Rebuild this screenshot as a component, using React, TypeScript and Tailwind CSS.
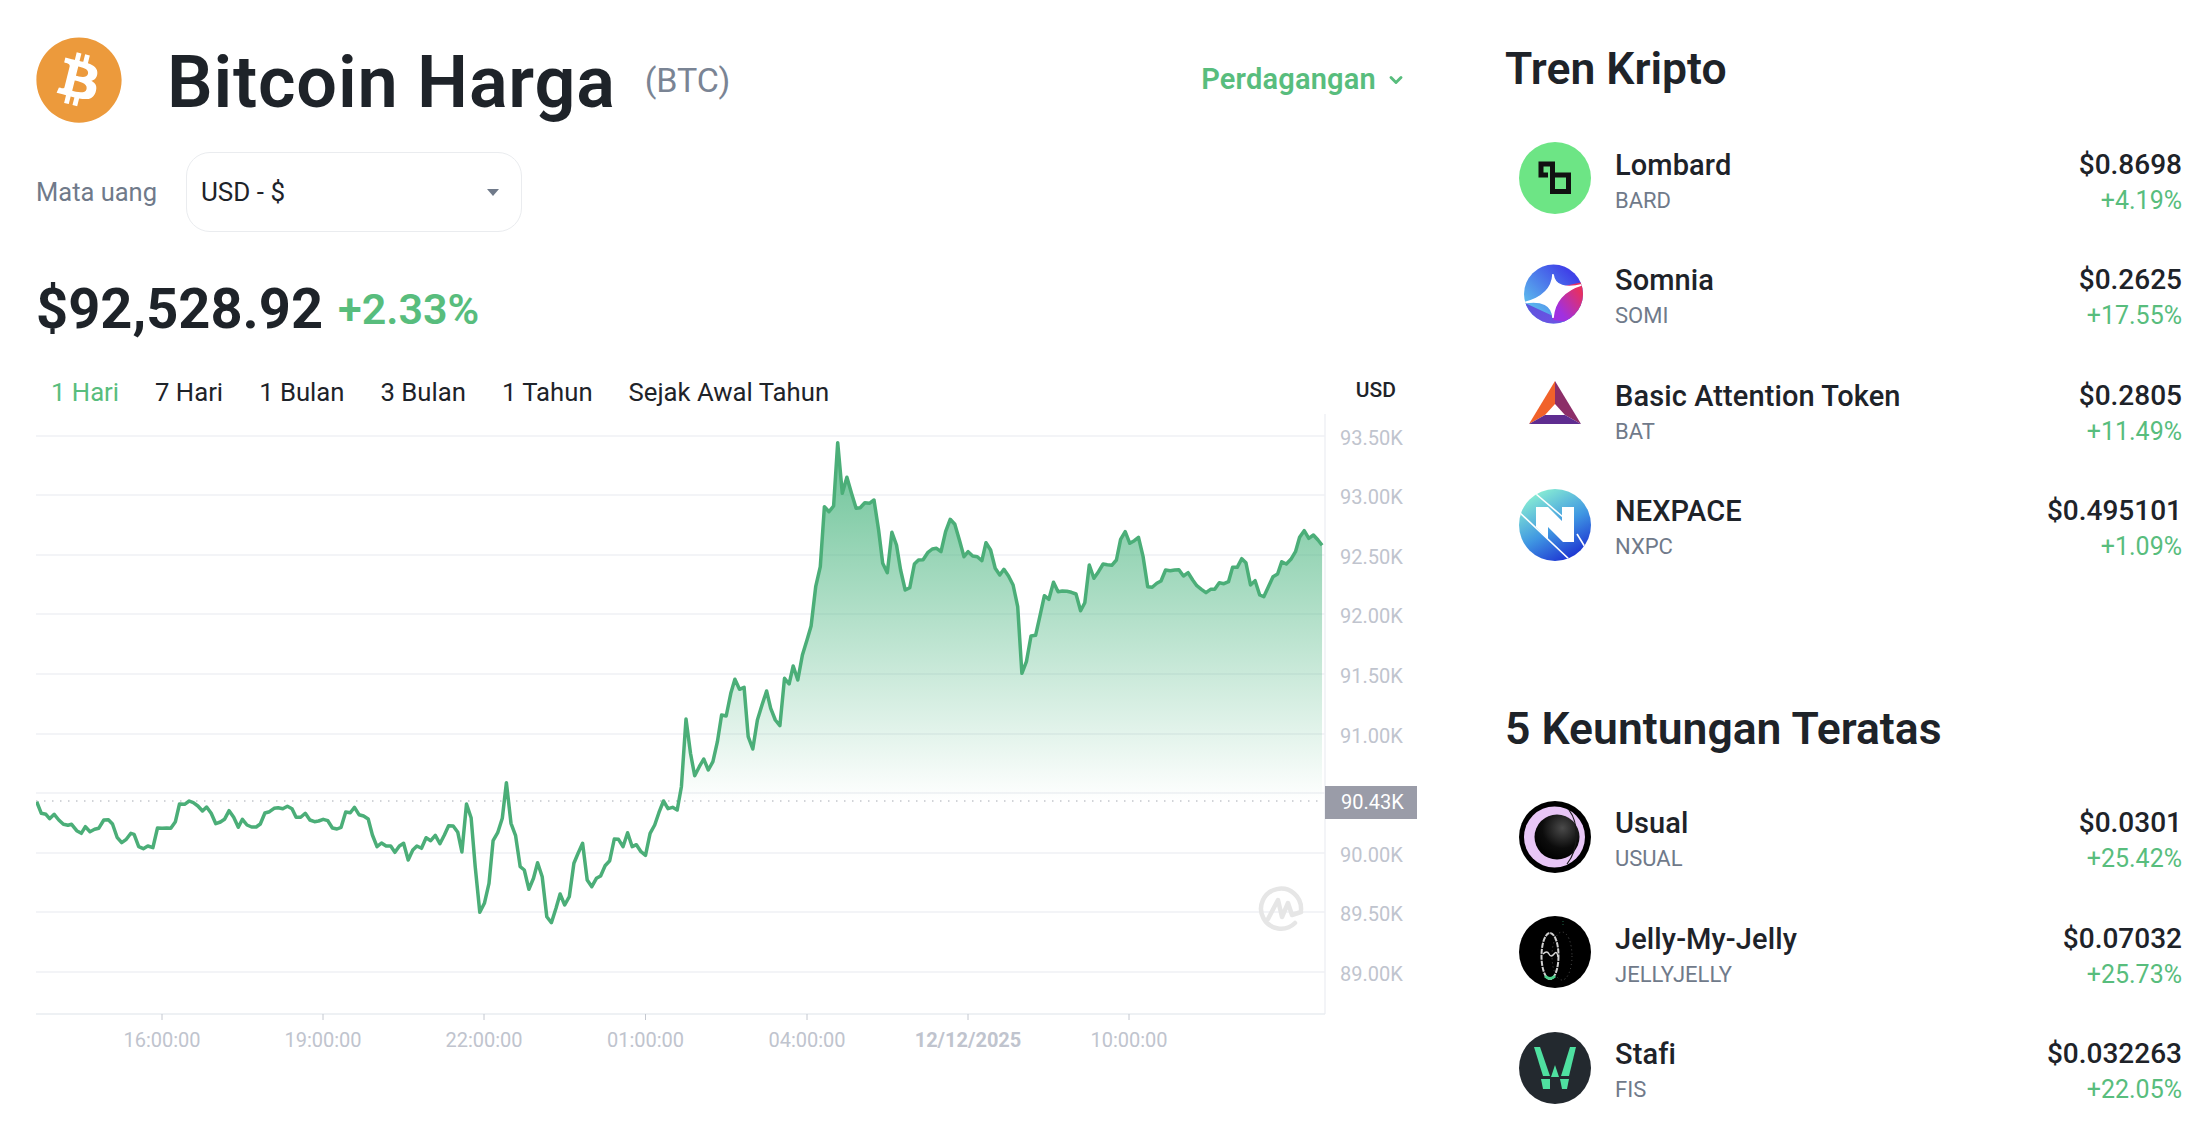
import { ReactNode } from 'react'
import { FaBitcoin } from 'react-icons/fa'
import { ChevronDown } from 'lucide-react'

// traced from the chart, x step is ~4.48px (5 min candles)
const LEFT_POINTS = [
  [80,245],[90,280],[100,283],[108,296],[118,283],[128,300],[138,313],[148,316],[156,313],[167,332],[177,340],[186,320],[196,335],[206,328],[215,325],[226,300],[236,299],[245,312],[255,352],[265,368],[275,358],[285,340],[292,343],[302,380],[312,386],[322,378],[333,383],[343,324],[353,325],[363,324],[372,325],[382,305],[391,252],[402,253],[412,243],[421,248],[431,258],[441,273],[450,261],[460,280],[470,311],[480,306],[489,298],[499,272],[509,292],[519,322],[528,298],[538,315],[548,321],[558,321],[567,312],[577,279],[587,275],[597,265],[606,263],[616,266],[626,259],[636,266],[645,292],[655,292],[665,280],[675,300],[685,305],[694,303],[704,298],[714,302],[724,324],[734,327],[743,322],[753,276],[763,278],[772,262],[782,284],[792,288],[802,297],[811,345],[821,380],[831,369],[841,378],[851,378],[860,397],[870,378],[879,370],[889,420],[899,390],[908,378],[918,385],[928,353],[938,362],[948,346],[958,371],[968,345],[977,317],[987,318],[997,337],[1006,396],[1016,252],[1026,293],[1035,440],[1045,577],[1055,550],[1065,490],[1074,362],[1084,338],[1094,295],[1103,188],[1113,310],[1123,347],[1133,440],[1142,450],[1152,508],[1162,475],[1171,428],[1181,470],[1191,590],[1201,608],[1211,565],[1220,522],[1230,555],[1240,530],[1250,430],[1259,400],[1269,370],[1279,480],[1289,500],[1299,475],[1308,468],[1318,437],[1328,422],[1338,357],[1347,358],[1357,380],[1367,338],[1377,380],[1386,374],[1396,395],[1406,406],[1416,340],[1426,315],[1435,278],[1445,243],[1455,266],[1465,262],[1475,270],[1484,200],[1494,-3],[1504,100],[1513,167],[1523,140],
].map(([x, y]) => [x / 2.178, 720 + y / 3])

const RIGHT_POINTS = [
  [8,1077],[18,1110],[28,1085],[38,1025],[47,945],[57,948],[67,880],[76,838],[86,868],[96,862],[105,1010],[115,1047],[125,960],[135,915],[145,873],[154,925],[164,960],[174,977],[184,835],[194,852],[203,798],[213,840],[223,765],[233,720],[242,678],[252,560],[262,500],[271,320],[281,335],[291,318],[300,128],[310,280],[320,232],[330,280],[340,325],[349,323],[359,308],[369,310],[379,300],[389,390],[398,490],[408,518],[418,397],[428,435],[437,510],[447,570],[457,563],[467,492],[476,480],[486,479],[496,458],[506,447],[515,445],[525,455],[535,395],[545,358],[555,373],[565,420],[575,470],[584,455],[594,468],[604,470],[614,482],[623,428],[633,450],[643,505],[653,525],[662,508],[672,528],[682,555],[692,620],[701,820],[711,785],[721,708],[731,706],[740,650],[750,587],[760,598],[770,547],[780,575],[789,573],[799,574],[809,577],[819,582],[829,632],[838,608],[848,495],[858,535],[868,515],[878,492],[887,494],[897,496],[907,480],[916,418],[926,395],[936,430],[946,422],[955,412],[965,470],[975,560],[985,562],[995,550],[1004,543],[1014,510],[1024,512],[1034,510],[1043,509],[1053,528],[1063,518],[1073,540],[1082,557],[1092,568],[1102,578],[1112,568],[1121,568],[1131,548],[1141,551],[1151,545],[1160,502],[1170,502],[1180,476],[1189,488],[1199,555],[1209,542],[1219,585],[1228,590],[1238,560],[1248,530],[1258,522],[1267,485],[1277,492],[1287,478],[1297,455],[1306,412],[1316,392],[1326,415],[1336,405],[1346,420],[1355,436],
].map(([x, y]) => [700 + x / 2.178, 400 + y / 3])

const POINTS = [...LEFT_POINTS, ...RIGHT_POINTS]
const LINE = POINTS.map(([x, y]) => `${x.toFixed(1)},${y.toFixed(1)}`).join(' ')
const BASE_Y = 801
const GRID_Y = [436, 495, 555, 614, 674, 734, 793, 853, 912, 972]
const Y_LABELS: [string, number][] = [
  ['93.50K', 438], ['93.00K', 497], ['92.50K', 557], ['92.00K', 616], ['91.50K', 676],
  ['91.00K', 736], ['90.00K', 855], ['89.50K', 914], ['89.00K', 974],
]
const X_LABELS: [string, number][] = [
  ['16:00:00', 162], ['19:00:00', 323], ['22:00:00', 484], ['01:00:00', 645.5],
  ['04:00:00', 807], ['12/12/2025', 968], ['10:00:00', 1129],
]
const TABS = ['1 Hari', '7 Hari', '1 Bulan', '3 Bulan', '1 Tahun', 'Sejak Awal Tahun']

const Chart = () => (
  <svg viewBox="36 414 1382 650" className="block w-[1382px] h-[650px]" fontFamily="Roboto, sans-serif">
    <defs>
      <linearGradient id="area" gradientUnits="userSpaceOnUse" x1="0" y1="442" x2="0" y2={BASE_Y}>
        <stop offset="0" stopColor="#45b37c" stopOpacity="0.8" />
        <stop offset="1" stopColor="#45b37c" stopOpacity="0" />
      </linearGradient>
      <clipPath id="above">
        <rect x="36" y="414" width="1289" height={BASE_Y - 414} />
      </clipPath>
    </defs>
    {GRID_Y.map((y) => (
      <line key={y} x1="36" x2="1325" y1={y} y2={y} stroke="#eff1f5" strokeWidth="1.5" />
    ))}
    <line x1="1325" x2="1325" y1="414" y2="1014" stroke="#eff1f5" strokeWidth="1.5" />
    <line x1="36" x2="1325" y1="1014" y2="1014" stroke="#e8ecf0" strokeWidth="1.5" />
    {X_LABELS.map(([label, x]) => (
      <g key={label}>
        <line x1={x} x2={x} y1="1014" y2="1020" stroke="#c4c8d0" strokeWidth="1" />
        <text
          x={x}
          y="1047"
          textAnchor="middle"
          fontSize="20"
          fill="#c0c4ce"
          fontWeight={label.includes('/') ? 700 : 400}
        >
          {label}
        </text>
      </g>
    ))}
    {Y_LABELS.map(([label, y]) => (
      <text key={label} x="1340" y={y + 7} fontSize="20" fill="#c0c4ce">
        {label}
      </text>
    ))}
    <polygon points={`36,${BASE_Y} ${LINE} 1322,${BASE_Y}`} fill="url(#area)" clipPath="url(#above)" />
    <line x1="36" x2="1323" y1={BASE_Y} y2={BASE_Y} stroke="#c4c6cc" strokeWidth="1.5" strokeDasharray="1.5 6.5" />
    <polyline points={LINE} fill="none" stroke="#4bae78" strokeWidth="3.5" strokeLinejoin="round" />
    <g fill="none" stroke="#e6e6e6" strokeWidth="4.5" strokeLinecap="round" strokeLinejoin="round">
      <path d="M1295 923 A20 20 0 1 1 1301 910" />
      <path d="M1268 919 L1278 900 L1282 917 L1288 903 L1292 915 L1301 912" />
    </g>
    <rect x="1325" y="786" width="92" height="33" fill="#9a9ca8" />
    <text x="1341" y="809" fontSize="20" fill="#ffffff">
      90.43K
    </text>
  </svg>
)

const Lombard = () => (
  <svg viewBox="0 0 72 72" className="w-full h-full">
    <circle cx="36" cy="36" r="36" fill="#6de585" />
    <path
      d="M29 33 H22 V22 H33.5 V49.5 H49.5 V33 H33.5"
      fill="none"
      stroke="#111111"
      strokeWidth="5"
    />
  </svg>
)

const Somnia = () => (
  <svg viewBox="0 0 72 72" className="w-full h-full">
    <defs>
      <linearGradient id="som-a" x1="0" y1="1" x2="1" y2="0">
        <stop offset="0.12" stopColor="#62d4ee" />
        <stop offset="0.75" stopColor="#3f42e8" />
      </linearGradient>
      <linearGradient id="som-b" x1="0.1" y1="0.9" x2="0.9" y2="0.1">
        <stop offset="0.2" stopColor="#a030e0" />
        <stop offset="0.9" stopColor="#e8305f" />
      </linearGradient>
      <linearGradient id="som-c" x1="0" y1="0" x2="1" y2="1">
        <stop offset="0" stopColor="#5a55dc" />
        <stop offset="1" stopColor="#7850e8" />
      </linearGradient>
      <clipPath id="som-clip">
        <circle cx="34.5" cy="36" r="29.5" />
      </clipPath>
    </defs>
    <g clipPath="url(#som-clip)">
      <rect width="72" height="72" fill="url(#som-a)" />
      <path d="M34 58 L4 44 L4 72 L70 72 L70 60 Z" fill="url(#som-c)" />
      <path d="M64 24 L36 30 L34 62 L66 66 Z" fill="url(#som-b)" />
      <path d="M34 16 Q36 34 66 26 Q36 34 34 60 Q33 40 4 45 Q33 38 34 16 Z" fill="#ffffff" stroke="#ffffff" strokeWidth="1.5" />
    </g>
  </svg>
)

const Bat = () => (
  <svg viewBox="0 0 72 72" className="w-full h-full">
    <polygon points="36,8 10,51 26,42 36,31" fill="#f1622a" />
    <polygon points="36,8 62,51 46,42 36,31" fill="#8c2e68" />
    <polygon points="10,51 62,51 46,42 26,42" fill="#5f2d90" />
  </svg>
)

const Nexpace = () => (
  <svg viewBox="0 0 72 72" className="w-full h-full">
    <defs>
      <linearGradient id="nx" x1="0.2" y1="0" x2="0.75" y2="1">
        <stop offset="0" stopColor="#8ff6d2" />
        <stop offset="0.55" stopColor="#3f96e2" />
        <stop offset="1" stopColor="#1a2bd0" />
      </linearGradient>
      <clipPath id="nx-clip">
        <circle cx="36" cy="36" r="36" />
      </clipPath>
    </defs>
    <circle cx="36" cy="36" r="36" fill="url(#nx)" />
    <polygon points="17,18 29,18 43,32 43,18 55,18 55,53 44,53 29,38 29,50 17,38" fill="#ffffff" />
    <g stroke="#ffffff" strokeWidth="1.6" clipPath="url(#nx-clip)">
      <line x1="17" y1="5" x2="44" y2="28" />
      <line x1="0" y1="23" x2="52" y2="72" />
      <line x1="58" y1="45" x2="66" y2="58" />
    </g>
  </svg>
)

const Usual = () => (
  <svg viewBox="0 0 72 72" className="w-full h-full">
    <defs>
      <radialGradient id="us" cx="0.62" cy="0.3" r="0.75">
        <stop offset="0" stopColor="#4a4a4a" />
        <stop offset="0.6" stopColor="#0c0c0c" />
        <stop offset="1" stopColor="#000000" />
      </radialGradient>
    </defs>
    <circle cx="36" cy="36" r="36" fill="#000000" />
    <circle cx="35.5" cy="36" r="30.5" fill="#e8c6f6" />
    <circle cx="38" cy="36" r="22.5" fill="url(#us)" />
    <path d="M50 9 C60 22 60 48 48 63" fill="none" stroke="#1a1a1a" strokeWidth="1.2" />
  </svg>
)

const Jelly = () => (
  <svg viewBox="0 0 72 72" className="w-full h-full">
    <circle cx="36" cy="36" r="36" fill="#000000" />
    <ellipse cx="43" cy="40" rx="10" ry="24" fill="none" stroke="#555555" strokeWidth="1" strokeDasharray="1 3" />
    <ellipse cx="31" cy="40" rx="8.5" ry="23" fill="none" stroke="#d0d0d0" strokeWidth="2" strokeDasharray="5 1" />
    <path d="M24 38 Q28 34 30 38 T35 38 T39 41" fill="none" stroke="#d8d8d8" strokeWidth="1.4" />
    <path d="M26 60 Q31 65 36 60" fill="none" stroke="#4fd08c" strokeWidth="3" />
    <line x1="44" y1="5" x2="44" y2="11" stroke="#1f6a4a" strokeWidth="1" strokeDasharray="1 2" />
  </svg>
)

const Stafi = () => (
  <svg viewBox="0 0 72 72" className="w-full h-full">
    <circle cx="36" cy="36" r="36" fill="#23292f" />
    <g fill="#4fe0a0">
      <polygon points="15,15 21,15 31,44 24,44" />
      <polygon points="51,15 57,15 50,44 42,44" />
      <polygon points="36,33 40,45 32,45" />
      <polygon points="22,47 31,47 31,57 24,57" />
      <polygon points="41,47 50,47 48,57 43,57" />
    </g>
  </svg>
)

type Coin = { icon: ReactNode; name: string; symbol: string; price: string; change: string }

const TRENDING: Coin[] = [
  { icon: <Lombard />, name: 'Lombard', symbol: 'BARD', price: '$0.8698', change: '+4.19%' },
  { icon: <Somnia />, name: 'Somnia', symbol: 'SOMI', price: '$0.2625', change: '+17.55%' },
  { icon: <Bat />, name: 'Basic Attention Token', symbol: 'BAT', price: '$0.2805', change: '+11.49%' },
  { icon: <Nexpace />, name: 'NEXPACE', symbol: 'NXPC', price: '$0.495101', change: '+1.09%' },
]

const GAINERS: Coin[] = [
  { icon: <Usual />, name: 'Usual', symbol: 'USUAL', price: '$0.0301', change: '+25.42%' },
  { icon: <Jelly />, name: 'Jelly-My-Jelly', symbol: 'JELLYJELLY', price: '$0.07032', change: '+25.73%' },
  { icon: <Stafi />, name: 'Stafi', symbol: 'FIS', price: '$0.032263', change: '+22.05%' },
]

const CoinRow = ({ coin }: { coin: Coin }) => (
  <div className="flex items-center h-[72px] pl-[14px] mb-[43.5px]">
    <div className="w-[72px] h-[72px] shrink-0">{coin.icon}</div>
    <div className="ml-[24px] pt-[9px] flex-1 flex flex-col">
      <span className="text-[29px] leading-[36px] font-medium tracking-[0.1px] text-[#1e2329]">{coin.name}</span>
      <span className="text-[22px] leading-[36px] text-[#707a8a]">{coin.symbol}</span>
    </div>
    <div className="pt-[9px] flex flex-col items-end">
      <span className="text-[28px] leading-[36px] font-medium text-[#1e2329]">{coin.price}</span>
      <span className="text-[25px] leading-[36px] text-[#58bd7d]">{coin.change}</span>
    </div>
  </div>
)

export default function App() {
  return (
    <div className="flex w-[2198px] h-[1124px] overflow-hidden bg-white font-['Roboto',sans-serif] text-[#1e2329]">
      <div className="w-[1505px] shrink-0 pl-[36px] pt-[36px]">
        <div className="flex items-center h-[88px] w-[1370px]">
          <FaBitcoin className="w-[88px] h-[88px] -ml-[1px] text-[#ec9a3c] shrink-0" />
          <h1 className="ml-[44px] pt-[6px] text-[72px] leading-[88px] font-semibold tracking-[0.8px]">Bitcoin Harga</h1>
          <span className="ml-[29px] text-[34px] text-[#7a8494]">(BTC)</span>
          <div className="ml-auto flex items-center text-[#58bd7d] text-[29px] font-semibold tracking-[0.2px]">
            Perdagangan
            <ChevronDown className="ml-[10px] w-[20px] h-[20px]" strokeWidth={3.5} />
          </div>
        </div>

        <div className="flex items-center mt-[28px]">
          <span className="text-[25.5px] text-[#707a8a] w-[150px]">Mata uang</span>
          <div className="flex items-center w-[336px] h-[80px] border border-[#eaecef] rounded-[24px] pl-[14px] pr-[22px] text-[26px]">
            USD - $
            <span className="ml-auto w-0 h-0 border-x-[6px] border-x-transparent border-t-[7px] border-t-[#707a8a]" />
          </div>
        </div>

        <div className="flex items-center h-[72px] mt-[41px]">
          <span className="text-[56px] font-bold">$92,528.92</span>
          <span className="ml-[15px] text-[43px] font-semibold text-[#58bd7d]">+2.33%</span>
        </div>

        <div className="flex items-center h-[44px] mt-[25px] w-[1360px]">
          <div className="flex items-center gap-[36px] pl-[15px] text-[25.7px]">
            {TABS.map((tab, i) => (
              <span key={tab} className={i === 0 ? 'text-[#58bd7d]' : ''}>
                {tab}
              </span>
            ))}
          </div>
          <span className="ml-auto text-[21px] font-medium -mt-[3px]">USD</span>
        </div>

        <Chart />
      </div>

      <div className="w-[677px] shrink-0">
        <h2 className="mt-[41px] text-[44.5px] leading-[56px] font-semibold">Tren Kripto</h2>
        <div className="mt-[45px]">
          {TRENDING.map((coin) => (
            <CoinRow key={coin.symbol} coin={coin} />
          ))}
        </div>
        <h2 className="mt-[140px] text-[44.5px] leading-[56px] font-semibold">5 Keuntungan Teratas</h2>
        <div className="mt-[44px]">
          {GAINERS.map((coin) => (
            <CoinRow key={coin.symbol} coin={coin} />
          ))}
        </div>
      </div>
    </div>
  )
}
